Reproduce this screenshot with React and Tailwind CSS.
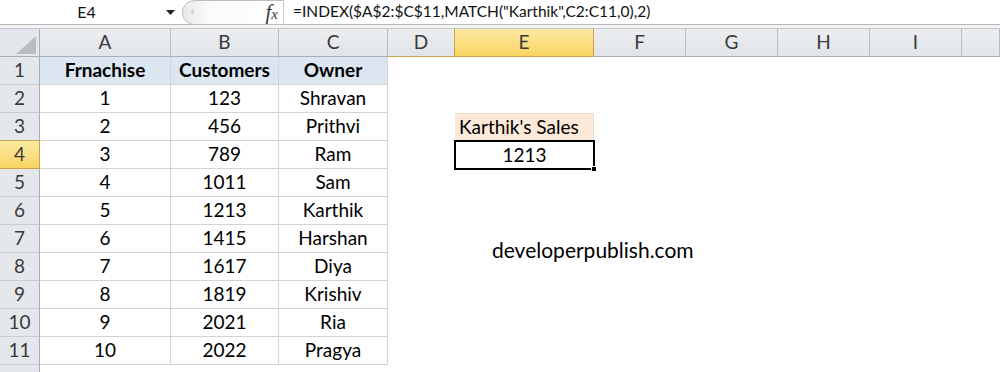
import React from "react";

const cols = ["A", "B", "C", "D", "E", "F", "G", "H", "I", ""];

const data = [
  [1, 123, "Shravan"],
  [2, 456, "Prithvi"],
  [3, 789, "Ram"],
  [4, 1011, "Sam"],
  [5, 1213, "Karthik"],
  [6, 1415, "Harshan"],
  [7, 1617, "Diya"],
  [8, 1819, "Krishiv"],
  [9, 2021, "Ria"],
  [10, 2022, "Pragya"],
];

function FormulaBar() {
  return (
    <div className="flex h-[25px] items-stretch bg-white border-b border-[#b9b9b9]">
      <div className="w-[165px] flex items-center justify-center text-[16px] text-[#111] pl-[8px]">
        E4
      </div>
      <div className="w-[17px] flex items-center pl-[1px]">
        <svg width="9" height="5" viewBox="0 0 9 5">
          <path d="M0 0 H9 L4.5 5 Z" fill="#222" />
        </svg>
      </div>
      <div className="relative w-[101px] flex items-center justify-end pr-[5px]">
        <svg className="absolute left-0 top-0" width="101" height="25" viewBox="0 0 101 25">
          <defs>
            <linearGradient id="pill" x1="0" x2="1" y1="0" y2="0">
              <stop offset="0" stopColor="#e9e9e9" />
              <stop offset="0.25" stopColor="#fafafa" />
              <stop offset="1" stopColor="#ffffff" />
            </linearGradient>
          </defs>
          <path d="M101 0.5 H14 C5 0.5 0.5 6 0.5 12.5 C0.5 19 5 24.5 14 24.5 H101" fill="url(#pill)" stroke="#bdbdbd" />
          <ellipse cx="10.5" cy="11.5" rx="1.5" ry="2.5" fill="#cfcfcf" />
        </svg>
        <span className="relative font-['Liberation_Serif',serif] italic text-[#3a3a3a] text-[21px] leading-none">
          f<span className="text-[15px]">x</span>
        </span>
      </div>
      <div className="flex-1 border-l border-[#c8c8c8] flex items-center pl-[9px] text-[15.5px] text-[#111] whitespace-nowrap">
        =INDEX($A$2:$C$11,MATCH("Karthik",C2:C11,0),2)
      </div>
    </div>
  );
}

function Corner() {
  return (
    <div className="relative bg-[#e4e7eb] border-r border-b border-[#a8aeb5]">
      <svg className="absolute left-[16px] top-[7px]" width="20" height="18" viewBox="0 0 20 18">
        <path d="M20 0 V18 H0 Z" fill="#b9bcc0" />
      </svg>
    </div>
  );
}

export default function App() {
  const rows = [];
  for (let r = 1; r <= 12; r++) rows.push(r);

  return (
    <div className="w-[1000px] h-[372px] overflow-hidden bg-white font-['Lato',sans-serif] relative">
      <FormulaBar />
      <div className="h-[3px] bg-[#f4f4f4]" />
      <div className="grid grid-cols-[40px_131px_108px_109px_67px_139px_92px_92px_92px_92px_1fr] auto-rows-[28px] border-t border-[#c3c7cc]">
        <Corner />
        {cols.map((c, i) =>
          c === "E" ? (
            <div
              key={i}
              className="flex items-center justify-center text-[19px] text-[#3a3a3a] bg-gradient-to-b from-[#fde9a3] to-[#f8d45f] border-r border-b border-[#c9a24a]"
            >
              {c}
            </div>
          ) : (
            <div
              key={i}
              className={
                "flex items-center justify-center text-[19px] text-[#3a3a3a] bg-gradient-to-b from-[#eceef1] to-[#e1e4e8] border-b border-[#a8aeb5] " +
                (c === "D" ? "border-r border-[#c9a24a]" : "border-r border-r-[#b8bdc3]")
              }
            >
              {c}
            </div>
          )
        )}

        {rows.map((r) => (
          <React.Fragment key={r}>
            <div
              className={
                "flex items-center justify-center text-[19px] text-[#3a3a3a] border-r border-b " +
                (r === 4
                  ? "bg-gradient-to-b from-[#fde9a3] to-[#f8d45f] border-[#c9a24a]"
                  : r === 3
                  ? "bg-[#e4e7eb] border-r-[#a8aeb5] border-b-[#c9a24a]"
                  : "bg-[#e4e7eb] border-r-[#a8aeb5] border-b-[#c9ccd1]")
              }
            >
              {r <= 11 ? r : ""}
            </div>

            {[0, 1, 2].map((ci) => {
              if (r > 11) return <div key={ci} />;
              if (r === 1) {
                const h = ["Frnachise", "Customers", "Owner"][ci];
                return (
                  <div
                    key={ci}
                    className="flex items-center justify-center bg-[#dce6f1] border-r border-b border-[#d4d4d4] text-[19px] font-bold text-black"
                  >
                    {h}
                  </div>
                );
              }
              return (
                <div
                  key={ci}
                  className="flex items-center justify-center border-r border-b border-[#d4d4d4] text-[19px] text-black"
                >
                  {data[r - 2][ci]}
                </div>
              );
            })}

            <div />
            {r === 3 ? (
              <div className="flex items-center pl-[4px] bg-[#fde9d9] border-t border-r border-[#eadbd0] text-[19px] text-black whitespace-nowrap">
                Karthik's Sales
              </div>
            ) : r === 4 ? (
              <div className="relative flex items-center justify-center text-[19px] text-black">
                <div className="absolute -left-[1px] -top-[1px] -right-[1px] -bottom-[1px] border-2 border-black" />
                <div className="absolute -right-[3px] -bottom-[3px] w-[6px] h-[6px] bg-black border border-white" />
                <span className="relative">1213</span>
              </div>
            ) : (
              <div />
            )}
            <div />
            <div />
            <div />
            <div />
            <div />
          </React.Fragment>
        ))}
      </div>
      <div className="absolute left-[492px] top-[236px] text-[21px] leading-[28px] text-black whitespace-nowrap">
        developerpublish.com
      </div>
    </div>
  );
}
